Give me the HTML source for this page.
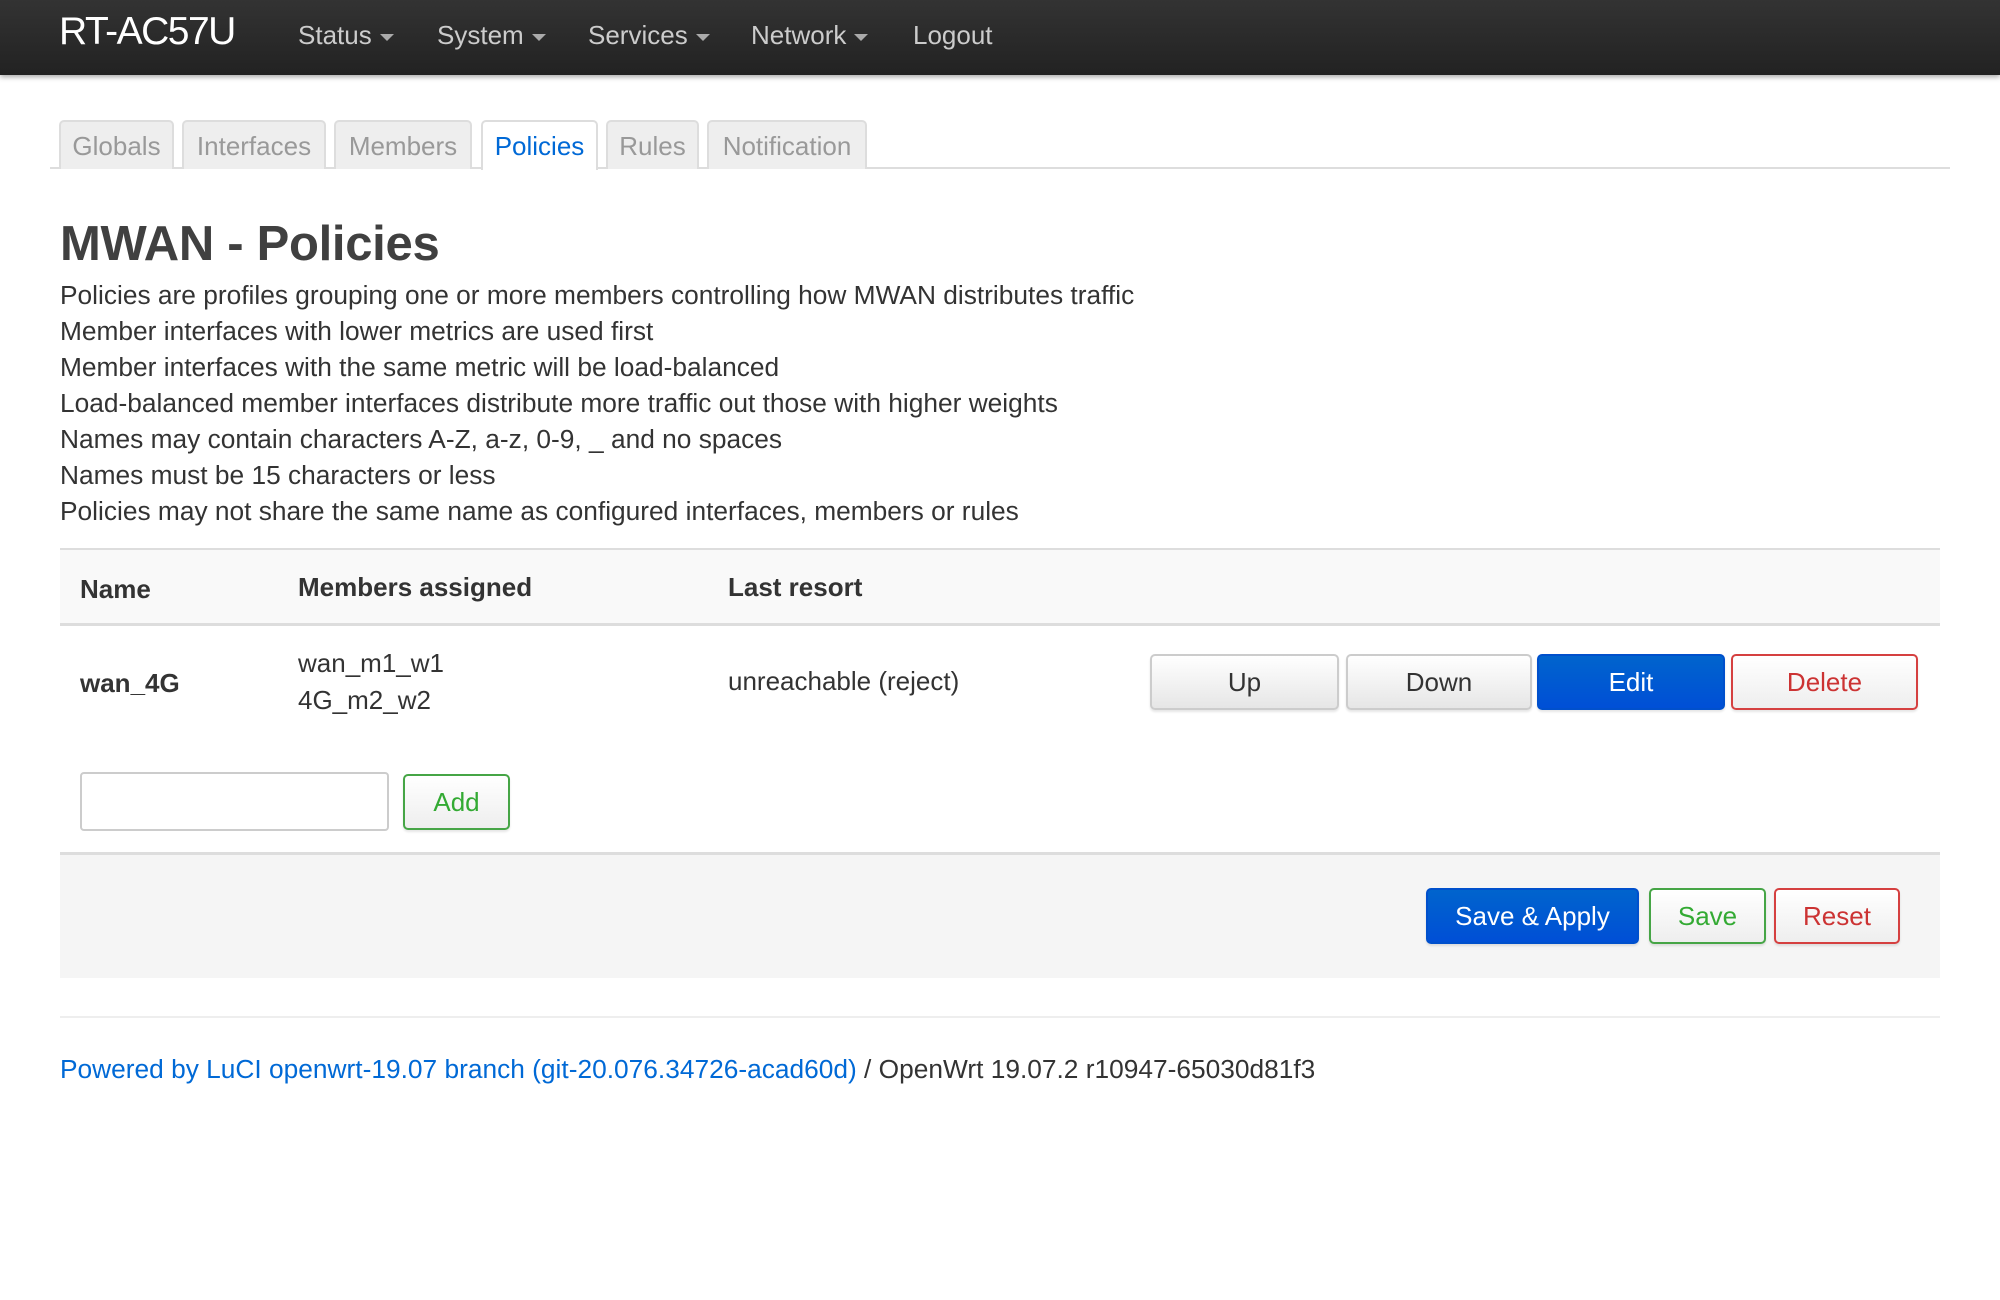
<!DOCTYPE html>
<html><head><meta charset="utf-8"><style>
*{box-sizing:border-box;margin:0;padding:0}
body{width:2000px;height:1300px;background:#fff;font-family:"Liberation Sans",Arial,sans-serif;color:#333;position:relative;overflow:hidden}
.nav{position:absolute;left:0;top:0;width:2000px;height:75px;background:linear-gradient(#333,#222);box-shadow:0 2px 5px rgba(0,0,0,.35)}
.brand{position:absolute;left:59px;top:10px;font-size:39px;color:#fff;letter-spacing:-1.5px}
.mi{position:absolute;top:20px;font-size:26px;color:#ccc}
.car{display:inline-block;width:0;height:0;border-left:7px solid transparent;border-right:7px solid transparent;border-top:7px solid #aaa;margin-left:8px;vertical-align:middle}
.tabline{position:absolute;left:50px;top:167px;width:1900px;height:2px;background:#ddd}
.tab{position:absolute;top:120px;height:49px;border:2px solid #ddd;border-bottom:none;border-radius:5px 5px 0 0;background:#eee;color:#999;font-size:26px;text-align:center;line-height:48px}
.tab.act{background:#fff;color:#0069d6;height:50px}
h1{position:absolute;left:60px;top:216px;font-size:49px;font-weight:bold;color:#404040;letter-spacing:-0.3px}
.desc{position:absolute;left:60px;top:277px;font-size:26.3px;line-height:36px;color:#333}
.thead{position:absolute;left:60px;top:548px;width:1880px;height:78px;background:#f9f9f9;border-top:2px solid #ddd;border-bottom:3px solid #ddd}
.th{position:absolute;font-size:26px;font-weight:bold;color:#333}
.td{position:absolute;font-size:26px;color:#333}
.btn{position:absolute;height:56px;border-radius:5px;font-size:26px;text-align:center;line-height:52px;border:2px solid #ccc;background:linear-gradient(#fff,#e6e6e6);color:#333;box-shadow:0 2px 2px rgba(0,0,0,.1)}
.blue{background:linear-gradient(#0064cd,#004fd6);border-color:#0050cc;color:#fff}
.red{border-color:#d54040;color:#c33;background:linear-gradient(#fff,#eee)}
.green{border-color:#46a546;color:#3a3;background:linear-gradient(#fff,#eee)}
.input{position:absolute;left:80px;top:772px;width:309px;height:59px;border:2px solid #ccc;border-radius:4px;background:#fff}
.actions{position:absolute;left:60px;top:852px;width:1880px;height:126px;background:#f5f5f5;border-top:3px solid #ddd}
.hr{position:absolute;left:60px;top:1016px;width:1880px;height:2px;background:#eee}
.foot{position:absolute;left:60px;top:1054px;font-size:26.3px;color:#333}
.foot a{color:#0069d6;text-decoration:none}
</style></head><body>
<div class="nav">
<div class="brand">RT-AC57U</div>
<div class="mi" style="left:298px">Status<span class="car"></span></div>
<div class="mi" style="left:437px">System<span class="car"></span></div>
<div class="mi" style="left:588px">Services<span class="car"></span></div>
<div class="mi" style="left:751px">Network<span class="car"></span></div>
<div class="mi" style="left:913px">Logout</div>
</div>
<div class="tabline"></div>
<div class="tab" style="left:59px;width:115px">Globals</div>
<div class="tab" style="left:182px;width:144px">Interfaces</div>
<div class="tab" style="left:334px;width:138px">Members</div>
<div class="tab act" style="left:481px;width:117px">Policies</div>
<div class="tab" style="left:606px;width:93px">Rules</div>
<div class="tab" style="left:707px;width:160px">Notification</div>
<h1>MWAN - Policies</h1>
<div class="desc">Policies are profiles grouping one or more members controlling how MWAN distributes traffic<br>Member interfaces with lower metrics are used first<br>Member interfaces with the same metric will be load-balanced<br>Load-balanced member interfaces distribute more traffic out those with higher weights<br>Names may contain characters A-Z, a-z, 0-9, _ and no spaces<br>Names must be 15 characters or less<br>Policies may not share the same name as configured interfaces, members or rules</div>
<div class="thead"></div>
<div class="th" style="left:80px;top:574px">Name</div>
<div class="th" style="left:298px;top:572px">Members assigned</div>
<div class="th" style="left:728px;top:572px">Last resort</div>
<div class="td" style="left:80px;top:668px;font-weight:bold">wan_4G</div>
<div class="td" style="left:298px;top:645px;line-height:37px">wan_m1_w1<br>4G_m2_w2</div>
<div class="td" style="left:728px;top:666px">unreachable (reject)</div>
<div class="btn" style="left:1150px;top:654px;width:189px">Up</div>
<div class="btn" style="left:1346px;top:654px;width:186px">Down</div>
<div class="btn blue" style="left:1537px;top:654px;width:188px">Edit</div>
<div class="btn red" style="left:1731px;top:654px;width:187px">Delete</div>
<div class="input"></div>
<div class="btn green" style="left:403px;top:774px;width:107px">Add</div>
<div class="actions"></div>
<div class="btn blue" style="left:1426px;top:888px;width:213px">Save &amp; Apply</div>
<div class="btn green" style="left:1649px;top:888px;width:117px">Save</div>
<div class="btn red" style="left:1774px;top:888px;width:126px">Reset</div>
<div class="hr"></div>
<div class="foot"><a>Powered by LuCI openwrt-19.07 branch (git-20.076.34726-acad60d)</a> / OpenWrt 19.07.2 r10947-65030d81f3</div>
</body></html>
